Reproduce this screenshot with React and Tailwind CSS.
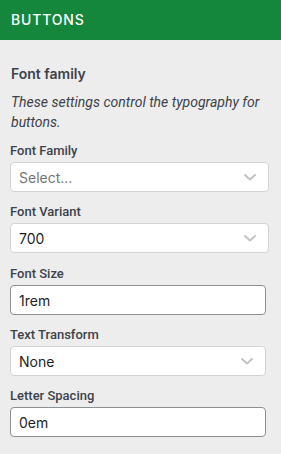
import React from "react";

const Chevron = () => (
  <svg width="12" height="7" viewBox="0 0 12 7" fill="none" className="shrink-0">
    <path d="M1 1l5 4.5L11 1" stroke="#c2c2c2" strokeWidth="2" strokeLinecap="round" strokeLinejoin="round" />
  </svg>
);

const Label = ({ children }) => (
  <label className="block text-[13px] leading-4 font-medium text-[#3c434a] mb-[3px] font-['Roboto',sans-serif]">
    {children}
  </label>
);

const SelectBox = ({ value, placeholder, wide = true }) => (
  <div
    className={`flex items-center justify-between h-[30px] bg-white border border-[#d3d3d3] rounded-[4px] pl-2 pr-3 ${
      wide ? "w-[259px]" : "w-[256px]"
    }`}
  >
    <span className={`text-[14px] ${placeholder ? "text-[#757575]" : "text-[#1e1e1e]"}`}>
      {placeholder || value}
    </span>
    <Chevron />
  </div>
);

const TextInput = ({ value }) => (
  <input
    type="text"
    defaultValue={value}
    className="block w-[256px] h-[30px] bg-white border border-[#8c8f94] rounded-[4px] px-2 text-[14px] text-[#1e1e1e] outline-none"
  />
);

export default function App() {
  return (
    <div className="w-[281px] h-[454px] bg-[#ededed] font-['Inter',sans-serif]">
      <div className="h-10 bg-[#15873d] flex items-center px-[11px]">
        <h1 className="text-white text-[14px] leading-5 font-medium tracking-[0.06em]">BUTTONS</h1>
      </div>

      <div className="px-[10px] pt-[24px]">
        <h2 className="px-px text-[14px] leading-5 font-semibold text-[#3c434a]">Font family</h2>
        <p className="px-px mt-2 text-[14px] leading-5 italic text-[#3c434a] font-['Roboto',sans-serif]">
          These settings control the typography for buttons.
        </p>

        <div className="mt-[11px]">
          <Label>Font Family</Label>
          <SelectBox placeholder="Select..." />
        </div>

        <div className="mt-[12px]">
          <Label>Font Variant</Label>
          <SelectBox value="700" />
        </div>

        <div className="mt-[13px]">
          <Label>Font Size</Label>
          <TextInput value="1rem" />
        </div>

        <div className="mt-[12px]">
          <Label>Text Transform</Label>
          <SelectBox value="None" wide={false} />
        </div>

        <div className="mt-[12px]">
          <Label>Letter Spacing</Label>
          <TextInput value="0em" />
        </div>
      </div>
    </div>
  );
}
